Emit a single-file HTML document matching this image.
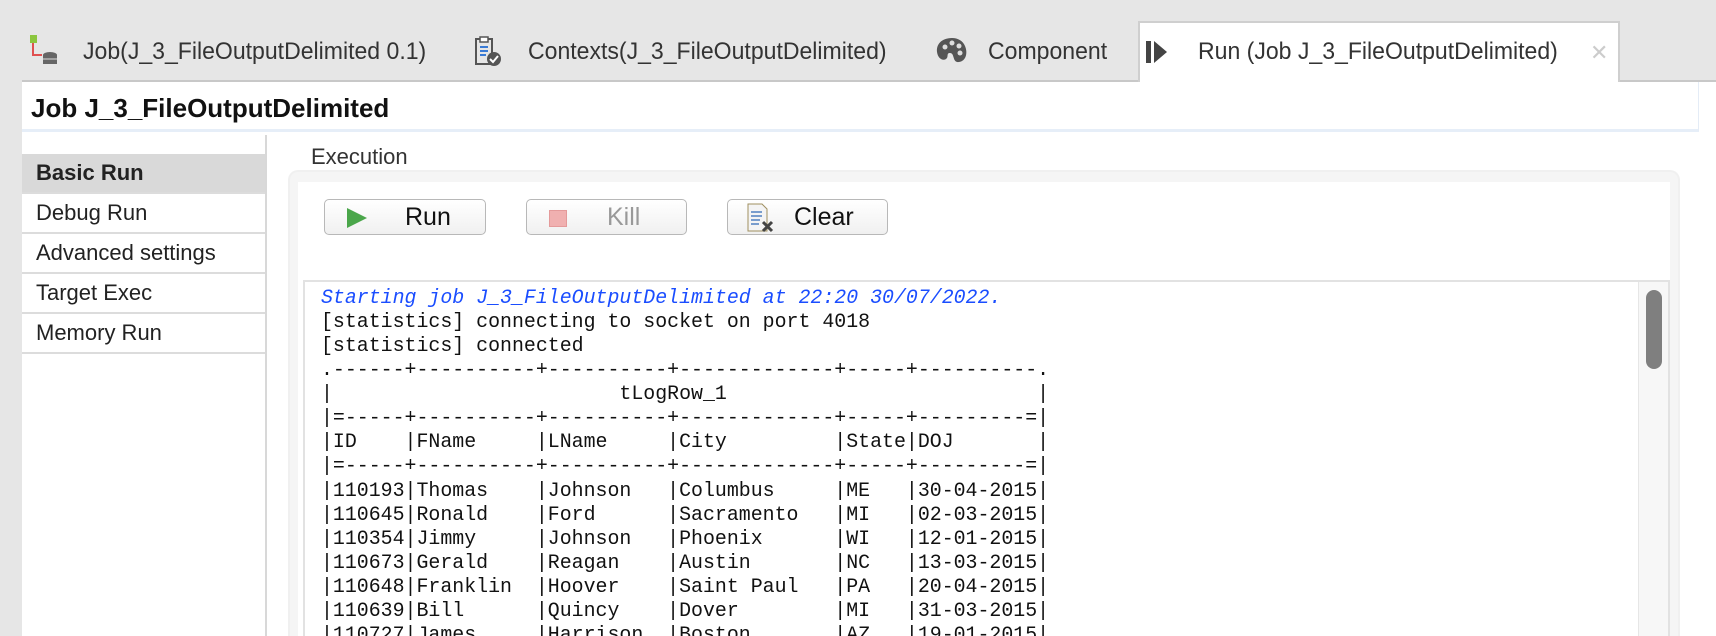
<!DOCTYPE html>
<html><head><meta charset="utf-8"><style>
*{margin:0;padding:0;box-sizing:border-box}
html,body{width:1716px;height:636px;overflow:hidden}
body{background:#fff;position:relative;font-family:"Liberation Sans",sans-serif;color:#222}
.abs{position:absolute}
.tabbar{left:0;top:0;width:1716px;height:82px;background:#e6e6e6}
.tabline{left:22px;top:80px;width:1694px;height:2px;background:#c8c8c8}
.tab{top:38px;font-size:24px;color:#333;white-space:nowrap;transform:scaleX(0.96);transform-origin:left}
.active{left:1138px;top:21px;width:482px;height:62px;background:#fff;border:2px solid #cfcfcf;border-bottom:none}
.title{left:22px;top:82px;width:1677px;height:50px;background:#fff;border-right:1px solid #e4ecf6;border-bottom:3px solid #e6eef8}
.side{left:22px;top:135px;width:245px;height:501px;border-right:2px solid #d8d8d8;background:#fff}
.item{position:absolute;left:0;width:243px;height:40px;border-bottom:2px solid #dcdcdc;font-size:22px;padding-left:14px;line-height:38px}
.btn{top:199px;height:36px;border:1px solid #b8b8b8;border-radius:5px;background:linear-gradient(#fff,#f0f0f0);font-size:25px;line-height:34px}
pre{font-family:"Liberation Mono",monospace;font-size:19.9px;line-height:24.07px;color:#111}
</style></head><body>
<div class="abs tabbar"></div>
<div class="abs" style="left:0;top:0;width:22px;height:636px;background:#e6e6e6"></div>
<div class="abs tabline"></div>
<div class="abs active"></div>
<svg class="abs" style="left:30px;top:35px" width="34" height="32"><rect x="0" y="0" width="7" height="8" fill="#8cc63f"/><path d="M3 8V20H12" stroke="#e05050" stroke-width="2" fill="none"/><ellipse cx="20" cy="20" rx="7" ry="3" fill="#666"/><rect x="13" y="20" width="14" height="9" fill="#666"/><path d="M13 24H27" stroke="#ddd"/></svg>
<div class="abs tab" style="left:83px">Job(J_3_FileOutputDelimited 0.1)</div>
<svg class="abs" style="left:474px;top:36px" width="34" height="32"><rect x="2" y="3" width="16" height="25" fill="none" stroke="#555" stroke-width="2"/><rect x="6" y="1" width="8" height="5" fill="#fff" stroke="#555" stroke-width="1.5"/><path d="M6 11h8M6 15h8M6 19h6" stroke="#3a7bd5" stroke-width="2"/><circle cx="20" cy="23" r="7" fill="#555"/><path d="M16 23l3 3 5-6" stroke="#fff" stroke-width="2" fill="none"/></svg>
<div class="abs tab" style="left:528px">Contexts(J_3_FileOutputDelimited)</div>
<svg class="abs" style="left:935px;top:36px" width="34" height="30"><path d="M17 2C6 2 1 9 2 16c1 7 6 9 9 7 3-2 0-6 4-6 5 0 2 10 9 9 7-1 9-9 6-16C28 5 23 2 17 2z" fill="#555"/><circle cx="10" cy="11" r="2.5" fill="#ddd"/><circle cx="17" cy="7" r="2.5" fill="#ddd"/><circle cx="24" cy="10" r="2.5" fill="#ddd"/><circle cx="25" cy="17" r="2.5" fill="#ddd"/></svg>
<div class="abs tab" style="left:988px">Component</div>
<svg class="abs" style="left:1145px;top:39px" width="30" height="26"><rect x="1" y="2" width="5" height="22" fill="#444"/><path d="M9 2L22 13 9 24z" fill="#444"/></svg>
<div class="abs tab" style="left:1198px">Run (Job J_3_FileOutputDelimited)</div>
<div class="abs" style="left:1590px;top:40px;font-size:22px;color:#ccc">✕</div>
<div class="abs title"></div>
<div class="abs" style="left:31px;top:93px;font-size:26px;font-weight:bold;color:#111">Job J_3_FileOutputDelimited</div>
<div class="abs side">
<div class="item" style="top:19px;background:#d9d9d9;font-weight:bold">Basic Run</div>
<div class="item" style="top:59px">Debug Run</div>
<div class="item" style="top:99px">Advanced settings</div>
<div class="item" style="top:139px">Target Exec</div>
<div class="item" style="top:179px">Memory Run</div>
</div>
<div class="abs" style="left:311px;top:144px;font-size:22px;color:#333">Execution</div>
<div class="abs" style="left:288px;top:170px;width:1392px;height:466px;border:2px solid #f0f0f0;border-bottom:none;border-radius:10px 10px 0 0;background:#f5f5f5"></div>
<div class="abs" style="left:298px;top:182px;width:1372px;height:454px;background:#fff"></div>
<div class="abs btn" style="left:324px;width:162px"><svg class="abs" style="left:20px;top:7px" width="24" height="22"><path d="M2 1L22 11 2 21z" fill="#4aa64a"/></svg><span class="abs" style="left:80px;color:#111">Run</span></div>
<div class="abs btn" style="left:526px;width:161px"><div class="abs" style="left:22px;top:10px;width:18px;height:17px;background:#f0b0b0;border:1px solid #e49a9a"></div><span class="abs" style="left:80px;color:#999">Kill</span></div>
<div class="abs btn" style="left:727px;width:161px"><svg class="abs" style="left:18px;top:3px" width="30" height="30"><path d="M2 1h14l5 5v22H2z" fill="#f4f4f4" stroke="#a09060"/><path d="M5 9h11M5 13h11M5 17h9M5 21h8" stroke="#5080c0" stroke-width="1.5"/><path d="M17 19l9 9M26 19l-9 9" stroke="#444" stroke-width="3"/></svg><span class="abs" style="left:66px;color:#111">Clear</span></div>
<div class="abs" style="left:303px;top:280px;width:1367px;height:356px;border:2px solid #e2e2e2;border-bottom:none;background:#fff;overflow:hidden">
<pre class="abs" style="left:16px;top:4px"><span style="color:#1a4dff;font-style:italic">Starting job J_3_FileOutputDelimited at 22:20 30/07/2022.</span>
[statistics] connecting to socket on port 4018
[statistics] connected
.------+----------+----------+-------------+-----+----------.
|                        tLogRow_1                          |
|=-----+----------+----------+-------------+-----+---------=|
|ID    |FName     |LName     |City         |State|DOJ       |
|=-----+----------+----------+-------------+-----+---------=|
|110193|Thomas    |Johnson   |Columbus     |ME   |30-04-2015|
|110645|Ronald    |Ford      |Sacramento   |MI   |02-03-2015|
|110354|Jimmy     |Johnson   |Phoenix      |WI   |12-01-2015|
|110673|Gerald    |Reagan    |Austin       |NC   |13-03-2015|
|110648|Franklin  |Hoover    |Saint Paul   |PA   |20-04-2015|
|110639|Bill      |Quincy    |Dover        |MI   |31-03-2015|
|110727|James     |Harrison  |Boston       |AZ   |19-01-2015|</pre>
<div class="abs" style="left:1333px;top:0;width:32px;height:360px;background:#f7f7f7;border-left:1px solid #e6e6e6"></div>
<div class="abs" style="left:1341px;top:8px;width:16px;height:79px;border-radius:8px;background:#7f7f7f"></div>
</div>
</body></html>
